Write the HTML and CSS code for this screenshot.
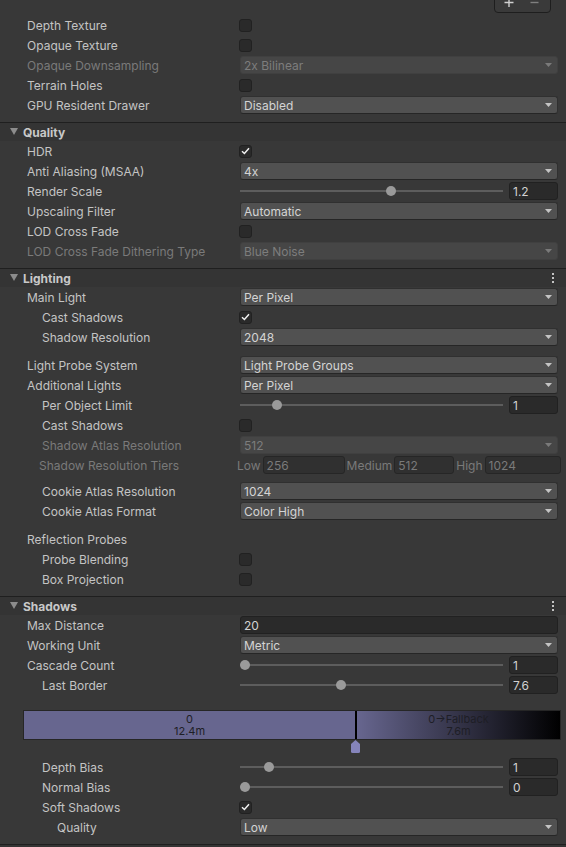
FILE: index.html
```html
<!DOCTYPE html>
<html>
<head>
<meta charset="utf-8">
<link rel="stylesheet" href="styles.css">
</head>
<body>
<div class="topbar">
  <div class="listfoot">
    <svg width="55" height="20" viewBox="0 0 55 20"><path d="M9.5 9.5h9M14 5v9" stroke="#d0d0d0" stroke-width="1.4"/><path d="M35.5 9.5h8" stroke="#808080" stroke-width="1.4"/></svg>
  </div>
</div>

<div class="section">
  <div class="row"><div class="label">Depth Texture</div><div class="value"><span class="check"></span></div></div>
  <div class="row"><div class="label">Opaque Texture</div><div class="value"><span class="check"></span></div></div>
  <div class="row off"><div class="label">Opaque Downsampling</div><div class="value"><div class="dd off"><span>2x Bilinear</span><svg class="arr" width="7" height="4" viewBox="0 0 7 4"><path d="M0 0h7L3.5 4z"/></svg></div></div></div>
  <div class="row"><div class="label">Terrain Holes</div><div class="value"><span class="check"></span></div></div>
  <div class="row"><div class="label">GPU Resident Drawer</div><div class="value"><div class="dd"><span>Disabled</span><svg class="arr" width="7" height="4" viewBox="0 0 7 4"><path d="M0 0h7L3.5 4z"/></svg></div></div></div>
</div>

<div class="hdr"><svg class="tri" width="8" height="7" viewBox="0 0 8 7"><path d="M0 0h8L4 7z"/></svg><span>Quality</span></div>
<div class="section">
  <div class="row"><div class="label">HDR</div><div class="value"><span class="check"><svg width="9" height="8" viewBox="0 0 9 8"><path d="M1 4.2l2.4 2.3L8 1.2" fill="none" stroke="#f0f0f0" stroke-width="1.5"/></svg></span></div></div>
  <div class="row"><div class="label">Anti Aliasing (MSAA)</div><div class="value"><div class="dd"><span>4x</span><svg class="arr" width="7" height="4" viewBox="0 0 7 4"><path d="M0 0h7L3.5 4z"/></svg></div></div></div>
  <div class="row"><div class="label">Render Scale</div><div class="value"><div class="slider" style="--v:0.579"><div class="track"><span class="thumb"></span></div><div class="field num">1.2</div></div></div></div>
  <div class="row"><div class="label">Upscaling Filter</div><div class="value"><div class="dd"><span>Automatic</span><svg class="arr" width="7" height="4" viewBox="0 0 7 4"><path d="M0 0h7L3.5 4z"/></svg></div></div></div>
  <div class="row"><div class="label">LOD Cross Fade</div><div class="value"><span class="check"></span></div></div>
  <div class="row off"><div class="label">LOD Cross Fade Dithering Type</div><div class="value"><div class="dd off"><span>Blue Noise</span><svg class="arr" width="7" height="4" viewBox="0 0 7 4"><path d="M0 0h7L3.5 4z"/></svg></div></div></div>
</div>

<div class="hdr"><svg class="tri" width="8" height="7" viewBox="0 0 8 7"><path d="M0 0h8L4 7z"/></svg><span>Lighting</span><svg class="kebab" width="2" height="10" viewBox="0 0 2 10"><rect y="0" width="2" height="2"/><rect y="4" width="2" height="2"/><rect y="8" width="2" height="2"/></svg></div>
<div class="section">
  <div class="row"><div class="label">Main Light</div><div class="value"><div class="dd"><span>Per Pixel</span><svg class="arr" width="7" height="4" viewBox="0 0 7 4"><path d="M0 0h7L3.5 4z"/></svg></div></div></div>
  <div class="row i1"><div class="label">Cast Shadows</div><div class="value"><span class="check"><svg width="9" height="8" viewBox="0 0 9 8"><path d="M1 4.2l2.4 2.3L8 1.2" fill="none" stroke="#f0f0f0" stroke-width="1.5"/></svg></span></div></div>
  <div class="row i1"><div class="label">Shadow Resolution</div><div class="value"><div class="dd"><span>2048</span><svg class="arr" width="7" height="4" viewBox="0 0 7 4"><path d="M0 0h7L3.5 4z"/></svg></div></div></div>
  <div class="row sp8"><div class="label">Light Probe System</div><div class="value"><div class="dd"><span>Light Probe Groups</span><svg class="arr" width="7" height="4" viewBox="0 0 7 4"><path d="M0 0h7L3.5 4z"/></svg></div></div></div>
  <div class="row"><div class="label">Additional Lights</div><div class="value"><div class="dd"><span>Per Pixel</span><svg class="arr" width="7" height="4" viewBox="0 0 7 4"><path d="M0 0h7L3.5 4z"/></svg></div></div></div>
  <div class="row i1"><div class="label">Per Object Limit</div><div class="value"><div class="slider" style="--v:0.125"><div class="track"><span class="thumb"></span></div><div class="field num">1</div></div></div></div>
  <div class="row i1"><div class="label">Cast Shadows</div><div class="value"><span class="check"></span></div></div>
  <div class="row i1 off"><div class="label">Shadow Atlas Resolution</div><div class="value"><div class="dd off"><span>512</span><svg class="arr" width="7" height="4" viewBox="0 0 7 4"><path d="M0 0h7L3.5 4z"/></svg></div></div></div>
  <div class="row tiers off"><div class="label">Shadow Resolution Tiers</div><div class="value">
    <span class="tl">Low</span><div class="field off t1">256</div>
    <span class="tl">Medium</span><div class="field off t2">512</div>
    <span class="tl">High</span><div class="field off t3">1024</div>
  </div></div>
  <div class="row i1 sp6"><div class="label">Cookie Atlas Resolution</div><div class="value"><div class="dd"><span>1024</span><svg class="arr" width="7" height="4" viewBox="0 0 7 4"><path d="M0 0h7L3.5 4z"/></svg></div></div></div>
  <div class="row i1"><div class="label">Cookie Atlas Format</div><div class="value"><div class="dd"><span>Color High</span><svg class="arr" width="7" height="4" viewBox="0 0 7 4"><path d="M0 0h7L3.5 4z"/></svg></div></div></div>
  <div class="row sp8"><div class="label">Reflection Probes</div><div class="value"></div></div>
  <div class="row i1"><div class="label">Probe Blending</div><div class="value"><span class="check"></span></div></div>
  <div class="row i1"><div class="label">Box Projection</div><div class="value"><span class="check"></span></div></div>
</div>

<div class="hdr"><svg class="tri" width="8" height="7" viewBox="0 0 8 7"><path d="M0 0h8L4 7z"/></svg><span>Shadows</span><svg class="kebab" width="2" height="10" viewBox="0 0 2 10"><rect y="0" width="2" height="2"/><rect y="4" width="2" height="2"/><rect y="8" width="2" height="2"/></svg></div>
<div class="section">
  <div class="row"><div class="label">Max Distance</div><div class="value"><div class="field wide">20</div></div></div>
  <div class="row"><div class="label">Working Unit</div><div class="value"><div class="dd"><span>Metric</span><svg class="arr" width="7" height="4" viewBox="0 0 7 4"><path d="M0 0h7L3.5 4z"/></svg></div></div></div>
  <div class="row"><div class="label">Cascade Count</div><div class="value"><div class="slider" style="--v:0"><div class="track"><span class="thumb"></span></div><div class="field num">1</div></div></div></div>
  <div class="row i1"><div class="label">Last Border</div><div class="value"><div class="slider" style="--v:0.38"><div class="track"><span class="thumb"></span></div><div class="field num">7.6</div></div></div></div>
  <div class="cascade">
    <div class="seg s1"><div>0</div><div>12.4m</div></div>
    <div class="divider"></div>
    <div class="seg s2"><div>0→Fallback</div><div>7.6m</div></div>
  </div>
  <div class="marker"><svg width="9" height="13" viewBox="0 0 9 13"><path d="M4.5 0L9 4v7.5Q9 13 7.5 13h-6Q0 13 0 11.5V4z" fill="#8584bb"/></svg></div>
  <div class="row i1"><div class="label">Depth Bias</div><div class="value"><div class="slider" style="--v:0.095"><div class="track"><span class="thumb"></span></div><div class="field num">1</div></div></div></div>
  <div class="row i1"><div class="label">Normal Bias</div><div class="value"><div class="slider" style="--v:0"><div class="track"><span class="thumb"></span></div><div class="field num">0</div></div></div></div>
  <div class="row i1"><div class="label">Soft Shadows</div><div class="value"><span class="check"><svg width="9" height="8" viewBox="0 0 9 8"><path d="M1 4.2l2.4 2.3L8 1.2" fill="none" stroke="#f0f0f0" stroke-width="1.5"/></svg></span></div></div>
  <div class="row i2"><div class="label">Quality</div><div class="value"><div class="dd"><span>Low</span><svg class="arr" width="7" height="4" viewBox="0 0 7 4"><path d="M0 0h7L3.5 4z"/></svg></div></div></div>
</div>
<div class="hdr"></div>
</body>
</html>
```
FILE: styles.css
```css
html, body {
  margin: 0;
  padding: 0;
}
body {
  width: 566px;
  height: 847px;
  overflow: hidden;
  background: #383838;
  font-family: Inter, "Noto Sans", sans-serif;
  font-size: 12px;
  color: #c4c4c4;
}

.topbar {
  height: 15px;
  display: flex;
  justify-content: flex-end;
  padding-right: 15px;
}
.listfoot {
  width: 57px;
  height: 21px;
  box-sizing: border-box;
  margin-top: -8px;
  border: 1px solid #1e1e1e;
  border-radius: 0 0 4px 4px;
  background: #3a3a3a;
}
.listfoot svg { display: block; }

.section { padding-bottom: 7px; }

.hdr {
  display: flex;
  align-items: center;
  height: 19px;
  box-sizing: border-box;
  border-top: 1px solid #1f1f1f;
  background: #343434;
  padding-left: 10px;
  font-weight: 700;
  color: #c8c8c8;
}
.tri { fill: #8c8c8c; margin-right: 5px; margin-top: -1px; }
.kebab { fill: #c4c4c4; margin-left: auto; margin-right: 12px; }

.row {
  display: flex;
  align-items: center;
  height: 20px;
  padding-right: 8px;
}
.label {
  width: 240px;
  flex: none;
  box-sizing: border-box;
  padding-left: 27px;
  white-space: nowrap;
  overflow: hidden;
}
.i1 .label { padding-left: 42px; }
.i2 .label { padding-left: 57px; }
.row.off .label { color: #7a7a7a; }
.sp8 { margin-top: 8px; }
.sp6 { margin-top: 6px; }

.value {
  flex: 1;
  min-width: 0;
  display: flex;
  align-items: center;
}

.dd {
  flex: 1;
  height: 18px;
  box-sizing: border-box;
  display: flex;
  align-items: center;
  padding: 0 5px 0 3px;
  background: #515151;
  border: 1px solid #303030;
  border-bottom-color: #262626;
  border-radius: 3px;
  color: #d4d4d4;
}
.dd span { flex: 1; white-space: nowrap; }
.dd .arr { fill: #c4c4c4; }
.dd.off {
  background: #464646;
  border-color: #404040;
  color: #7d7d7d;
}
.dd.off .arr { fill: #7a7a7a; }

.check {
  width: 13px;
  height: 13px;
  box-sizing: border-box;
  margin-left: -1px;
  background: #2a2a2a;
  border: 1px solid #212121;
  border-radius: 3px;
  display: flex;
  align-items: center;
  justify-content: center;
}
.check svg { display: block; }

.field {
  height: 18px;
  box-sizing: border-box;
  display: flex;
  align-items: center;
  padding: 0 3px;
  background: #2a2a2a;
  border: 1px solid #212121;
  border-radius: 3px;
  color: #d2d2d2;
  white-space: nowrap;
}
.field.wide { flex: 1; }
.field.num { width: 49px; flex: none; }
.field.off {
  background: #303030;
  border-color: #262626;
  color: #7a7a7a;
}

.slider {
  flex: 1;
  display: flex;
  align-items: center;
  gap: 6px;
  height: 18px;
}
.track {
  flex: 1;
  height: 18px;
  display: flex;
  align-items: center;
  background: linear-gradient(#5d5d5d, #5d5d5d) center / 100% 2px no-repeat;
}
.thumb {
  width: 10px;
  height: 10px;
  border-radius: 50%;
  background: #9a9a9a;
  margin-left: calc(var(--v) * (100% - 10px));
}

.tiers .label { padding-left: 39px; width: 237px; }
.tiers { padding-right: 5px; }
.tiers .value { gap: 2px; }
.tl { color: #7a7a7a; white-space: nowrap; }
.t1 { width: 82px; flex: none; }
.t2 { width: 60px; flex: none; }
.t3 { flex: 1; }

.cascade {
  display: flex;
  height: 30px;
  box-sizing: border-box;
  margin: 15px 5px 0 23px;
  border: 1px solid #262626;
}
.seg {
  display: flex;
  flex-direction: column;
  justify-content: center;
  align-items: center;
  font-size: 11px;
  line-height: 12.5px;
  color: #1e1e26;
}
.s1 { width: 331px; background: #67668f; }
.divider { width: 2px; background: #000; }
.s2 { flex: 1; background: linear-gradient(90deg, #67668f, #000); }

.marker {
  height: 17px;
  padding-left: 351px;
}
.marker svg { display: block; }
```
